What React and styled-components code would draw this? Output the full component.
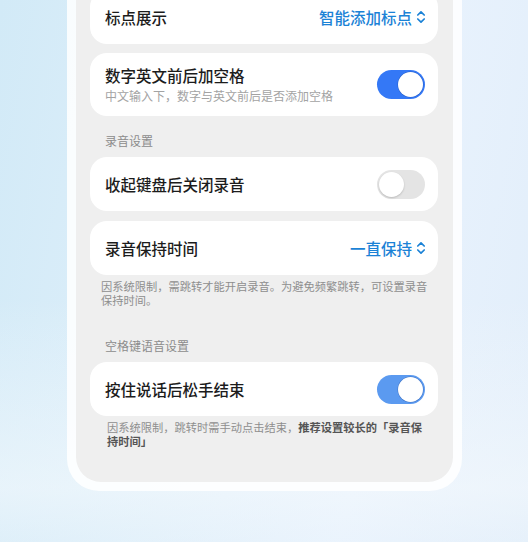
import React from 'react';
import styled, { createGlobalStyle } from 'styled-components';

const GlobalStyle = createGlobalStyle`
  html, body {
    margin: 0;
    padding: 0;
  }
  body {
    font-family: "Noto Sans CJK SC", "Noto Sans", sans-serif;
  }
`

const Page = styled.div`
  width: 528px;
  height: 542px;
  overflow: hidden;
  background:
    linear-gradient(180deg, rgba(255,255,255,0) 55%, rgba(246,250,253,0.55) 90%, rgba(240,247,252,0.3) 100%),
    linear-gradient(100deg, #d2eaf7 0%, #dfeffa 40%, #e8f2fd 70%, #e2eefa 100%);
`

const Frame = styled.div`
  margin: -10px 0 0 67px;
  width: 377px;
  padding: 0 9px 9px 9px;
  background: rgba(255, 255, 255, 0.86);
  border-radius: 0 0 32px 32px;
`

const Panel = styled.div`
  background: #efefef;
  border-radius: 0 0 25px 25px;
  padding: 0 15px 34px 14px;
  display: flex;
  flex-direction: column;
`

const Card = styled.div`
  background: #fff;
  border-radius: 17px;
  min-height: ${({ tall }) => (tall ? '63px' : '54px')};
  box-sizing: border-box;
  padding: ${({ tall }) => (tall ? '12px 13px 12px 15px' : '0 13px 0 15px')};
  display: flex;
  align-items: center;
  justify-content: space-between;
  margin-top: ${({ gap }) => gap || 0}px;
`

const TextBlock = styled.div`
  display: flex;
  flex-direction: column;
  gap: 3px;
`

const Title = styled.div`
  font-size: 15.5px;
  line-height: 20px;
  font-weight: 500;
  color: #1c1c1c;
`

const Sub = styled.div`
  font-size: 12px;
  line-height: 16px;
  color: #a3a3a3;
`

const Value = styled.div`
  display: flex;
  align-items: center;
  gap: 4px;
  font-size: 15.5px;
  line-height: 20px;
  font-weight: 500;
  color: #1b82d6;
  margin-right: -1px;
`

const SectionLabel = styled.div`
  font-size: 12px;
  line-height: 18px;
  color: #8c8c8c;
  padding: ${({ top }) => top}px 0 7px 15px;
`

const Note = styled.div`
  font-size: 11.25px;
  line-height: 14px;
  color: #8e8e8e;
  padding: 0 ${({ right }) => right}px 0 ${({ indent }) => indent}px;
  margin-top: 4px;
`

const Strong = styled.span`
  font-weight: 700;
  color: #555;
`

const Track = styled.div`
  position: relative;
  width: 48px;
  height: 29px;
  border-radius: 15px;
  flex-shrink: 0;
  background: ${({ on, faded }) => (on ? (faded ? '#5b9af0' : '#3478f6') : '#e4e4e4')};
`

const Knob = styled.div`
  position: absolute;
  top: 2px;
  left: ${({ on }) => (on ? '21px' : '2px')};
  width: 25px;
  height: 25px;
  border-radius: 50%;
  background: #fff;
  box-shadow: ${({ on }) => (on ? '0 0 0 0.5px rgba(20,60,140,0.4)' : '0 1px 2px rgba(0,0,0,0.18)')};
`

const Toggle = ({ on, faded }) => (
  <Track on={on} faded={faded}>
    <Knob on={on} />
  </Track>
)

const UpDown = () => (
  <svg width="10" height="14" viewBox="0 0 10 14" fill="none">
    <path d="M1.8 5 L5 1.8 L8.2 5" stroke="#1b82d6" strokeWidth="1.7" strokeLinecap="round" strokeLinejoin="round" />
    <path d="M1.8 9 L5 12.2 L8.2 9" stroke="#1b82d6" strokeWidth="1.7" strokeLinecap="round" strokeLinejoin="round" />
  </svg>
)

const App = () => {
  return (
    <Page>
      <GlobalStyle />
      <Frame>
        <Panel>
          <Card>
            <Title>标点展示</Title>
            <Value>智能添加标点<UpDown /></Value>
          </Card>
          <Card tall gap={9}>
            <TextBlock>
              <Title>数字英文前后加空格</Title>
              <Sub>中文输入下，数字与英文前后是否添加空格</Sub>
            </TextBlock>
            <Toggle on />
          </Card>

          <SectionLabel top={16}>录音设置</SectionLabel>
          <Card>
            <Title>收起键盘后关闭录音</Title>
            <Toggle />
          </Card>
          <Card gap={10}>
            <Title>录音保持时间</Title>
            <Value>一直保持<UpDown /></Value>
          </Card>
          <Note indent={11} right={8}>
            因系统限制，需跳转才能开启录音。为避免频繁跳转，可设置录音保持时间。
          </Note>

          <SectionLabel top={30}>空格键语音设置</SectionLabel>
          <Card>
            <Title>按住说话后松手结束</Title>
            <Toggle on faded />
          </Card>
          <Note indent={17} right={10}>
            因系统限制，跳转时需手动点击结束，<Strong>推荐设置较长的「录音保持时间」</Strong>
          </Note>
        </Panel>
      </Frame>
    </Page>
  );
};

export default App;
